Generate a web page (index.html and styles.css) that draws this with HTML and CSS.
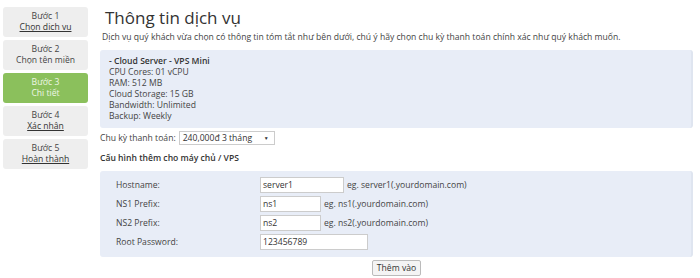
FILE: index.html
```html
<!DOCTYPE html>
<html lang="vi">
<head>
<meta charset="utf-8">
<title>Thông tin dịch vụ</title>
<link rel="stylesheet" href="styles.css">
</head>
<body>
<div class="page">
  <nav class="steps">
    <div class="step"><div>Bước 1</div><a href="#">Chọn dịch vụ</a></div>
    <div class="step"><div>Bước 2</div><div>Chọn tên miền</div></div>
    <div class="step active"><div>Bước 3</div><div>Chi tiết</div></div>
    <div class="step"><div>Bước 4</div><a href="#">Xác nhận</a></div>
    <div class="step"><div>Bước 5</div><a href="#">Hoàn thành</a></div>
  </nav>
  <main class="main">
    <h1 class="title">Thông tin dịch vụ</h1>
    <p class="desc">Dịch vụ quý khách vừa chọn có thông tin tóm tắt như bên dưới, chú ý hãy chọn chu kỳ thanh toán chính xác như quý khách muốn.</p>
    <div class="box info">
      <div class="name">- Cloud Server - VPS Mini</div>
      <div>CPU Cores: 01 vCPU</div>
      <div>RAM: 512 MB</div>
      <div>Cloud Storage: 15 GB</div>
      <div>Bandwidth: Unlimited</div>
      <div>Backup: Weekly</div>
    </div>
    <div class="cycle">
      <span>Chu kỳ thanh toán:</span>
      <span class="select"><span>240,000đ 3 tháng</span><span class="arrow">▼</span></span>
    </div>
    <div class="subhead">Cấu hình thêm cho máy chủ / VPS</div>
    <div class="box form">
      <div class="row"><span class="label">Hostname:</span><span class="input w84">server1</span><span class="hint">eg. server1(.yourdomain.com)</span></div>
      <div class="row"><span class="label">NS1 Prefix:</span><span class="input w61">ns1</span><span class="hint">eg. ns1(.yourdomain.com)</span></div>
      <div class="row"><span class="label">NS2 Prefix:</span><span class="input w61">ns2</span><span class="hint">eg. ns2(.yourdomain.com)</span></div>
      <div class="row"><span class="label">Root Password:</span><span class="input w108">123456789</span></div>
    </div>
    <div class="actions"><button class="btn" type="button">Thêm vào</button></div>
  </main>
</div>
</body>
</html>
```
FILE: styles.css
```css
* { box-sizing: border-box; }
body {
  margin: 0;
  background: #fff;
  font-family: "Open Sans", "Liberation Sans", sans-serif;
  font-size: 8.6px;
  color: #444;
}
.page {
  display: flex;
  padding: 7px 7px 0 3px;
}
.steps {
  width: 85px;
  display: flex;
  flex-direction: column;
  gap: 3px;
  flex-shrink: 0;
}
.step {
  height: 30px;
  background: #eeeeee;
  border-radius: 3px;
  text-align: center;
  line-height: 11px;
  padding-top: 4px;
  color: #444;
}
.step a { color: #333; text-decoration: underline; }
.step.active { background: #8bc05c; color: #eef6e6; }
.main {
  flex: 1;
  margin-left: 12px;
}
.title {
  margin: 0 0 0 5px;
  font-weight: 400;
  font-size: 17px;
  line-height: 22px;
  color: #333;
}
.desc {
  margin: 2px 0 0 2px;
  line-height: 12px;
  color: #444;
}
.box {
  background: #e8edf7;
  border-radius: 3px;
  border-right: 2px solid #dfe5f0;
}
.info {
  margin-top: 7px;
  padding: 6px 9px 0;
  line-height: 11px;
  height: 78px;
}
.info .name { font-weight: 600; color: #333; }
.cycle {
  margin-top: 3px;
  display: flex;
  align-items: center;
  gap: 3px;
  height: 14px;
}
.select {
  display: inline-flex;
  justify-content: space-between;
  align-items: center;
  width: 96px;
  height: 14px;
  border: 1px solid #ccc;
  background: #fff;
  padding: 0 5px 0 3px;
  color: #333;
  white-space: nowrap;
}
.select .arrow { font-size: 5px; }
.subhead {
  margin-top: 6px;
  font-weight: 600;
  color: #333;
  line-height: 14px;
}
.form {
  margin-top: 6px;
  padding: 6px 0 0 16px;
  display: flex;
  flex-direction: column;
  gap: 3px;
  height: 86px;
}
.row {
  display: flex;
  align-items: center;
  height: 16px;
}
.label { width: 144px; color: #444; }
.input {
  height: 16px;
  border: 1px solid #ccc;
  background: #fff;
  padding: 0 2px;
  line-height: 14px;
  color: #333;
}
.w84 { width: 84px; }
.w61 { width: 61px; }
.w108 { width: 108px; }
.hint { margin-left: 3px; color: #444; }
.actions {
  display: flex;
  justify-content: center;
  margin-top: 3px;
}
.btn {
  font-family: inherit;
  font-size: 8.6px;
  color: #333;
  background: #f4f4f4;
  border: 1px solid #bbb;
  border-radius: 2px;
  height: 16px;
  padding: 0 4px;
  line-height: 14px;
}
```
